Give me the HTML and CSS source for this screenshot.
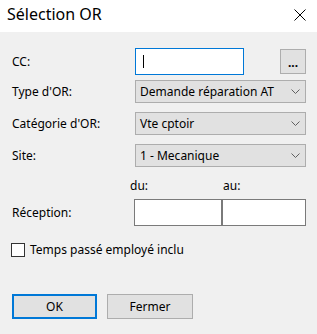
FILE: index.html
```html
<!DOCTYPE html>
<html lang="fr">
<head>
<meta charset="utf-8">
<title>Sélection OR</title>
<link rel="stylesheet" href="styles.css">
</head>
<body>
<div class="window">
  <div class="titlebar">
    <span class="title">Sélection OR</span>
    <svg class="close" width="12" height="12" viewBox="0 0 12 12"><path d="M0.5 0.5 L11.5 11.5 M11.5 0.5 L0.5 11.5" stroke="#000" stroke-width="1" fill="none"/></svg>
  </div>
  <div class="content">
    <div class="row row-cc">
      <span class="label">CC:</span>
      <div class="textbox textbox-cc"><span class="caret"></span></div>
      <button class="btn btn-dots">...</button>
    </div>
    <div class="row row-select row-first">
      <span class="label">Type d'OR:</span>
      <div class="combo"><span class="combo-text">Demande réparation AT</span><svg class="chev" width="9" height="5" viewBox="0 0 9 5"><path d="M0.5 0.5 L4.5 4.5 L8.5 0.5" stroke="#606060" fill="none" stroke-width="1"/></svg></div>
    </div>
    <div class="row row-select">
      <span class="label">Catégorie d'OR:</span>
      <div class="combo"><span class="combo-text">Vte cptoir</span><svg class="chev" width="9" height="5" viewBox="0 0 9 5"><path d="M0.5 0.5 L4.5 4.5 L8.5 0.5" stroke="#606060" fill="none" stroke-width="1"/></svg></div>
    </div>
    <div class="row row-select">
      <span class="label">Site:</span>
      <div class="combo"><span class="combo-text">1 - Mecanique</span><svg class="chev" width="9" height="5" viewBox="0 0 9 5"><path d="M0.5 0.5 L4.5 4.5 L8.5 0.5" stroke="#606060" fill="none" stroke-width="1"/></svg></div>
    </div>
    <div class="range-head">
      <span class="du">du:</span>
      <span class="au">au:</span>
    </div>
    <div class="row row-range">
      <span class="label">Réception:</span>
      <div class="textbox textbox-du"></div>
      <div class="textbox textbox-au"></div>
    </div>
    <div class="check-row">
      <span class="checkbox"></span>
      <span class="check-label">Temps passé employé inclu</span>
    </div>
    <div class="actions">
      <button class="btn btn-main btn-default">OK</button>
      <button class="btn btn-main">Fermer</button>
    </div>
  </div>
</div>
</body>
</html>
```

FILE: styles.css
```css
html, body {
  margin: 0;
  padding: 0;
}
body {
  width: 317px;
  height: 334px;
  background: #f0f0f0;
  font-family: "Noto Sans", "Open Sans", sans-serif;
  font-size: 12px;
  color: #000;
  overflow: hidden;
}
.window {
  display: flex;
  flex-direction: column;
}
.titlebar {
  height: 32px;
  background: #fff;
  display: flex;
  align-items: center;
  justify-content: space-between;
  padding: 0 11px 0 7px;
  box-sizing: border-box;
}
.title {
  font-size: 16px;
  margin-top: -4px;
}
.close {
  margin-top: -3px;
}
.content {
  display: flex;
  flex-direction: column;
  padding: 0 11px 0 12px;
}
.row {
  display: flex;
  align-items: center;
}
.label {
  width: 123px;
  flex: none;
}
.row-cc {
  margin-top: 16px;
  height: 27px;
}
.textbox {
  background: #fff;
  border: 1px solid #7a7a7a;
  box-sizing: border-box;
  height: 27px;
}
.textbox-cc {
  width: 109px;
  border-color: #0078d7;
  display: flex;
  align-items: center;
  padding-left: 7px;
}
.caret {
  width: 1px;
  height: 13px;
  background: #000;
}
.btn {
  font-family: inherit;
  font-size: 12px;
  color: #000;
  background: #e1e1e1;
  border: 1px solid #adadad;
  box-sizing: border-box;
  padding: 0;
  margin: 0;
}
.btn-dots {
  margin-left: 36px;
  width: 26px;
  height: 25px;
  font-weight: bold;
  line-height: 1;
  padding-top: 3px;
}
.row-select {
  margin-top: 9px;
  height: 23px;
}
.row-first {
  margin-top: 5px;
}
.combo {
  width: 171px;
  height: 23px;
  box-sizing: border-box;
  background: #e1e1e1;
  border: 1px solid #adadad;
  display: flex;
  align-items: center;
  justify-content: space-between;
  padding: 0 5px 0 4px;
}
.chev {
  display: block;
}
.range-head {
  margin-top: 10px;
  height: 17px;
  display: flex;
  align-items: center;
  padding-left: 118px;
}
.au {
  margin-left: 75px;
}
.row-range {
  margin-top: 5px;
  height: 27px;
}
.row-range .label {
  width: 122px;
}
.textbox-du {
  width: 89px;
}
.textbox-au {
  width: 84px;
}
.check-row {
  margin-top: 16px;
  display: flex;
  align-items: center;
  height: 15px;
}
.checkbox {
  width: 14px;
  height: 14px;
  box-sizing: border-box;
  border: 1px solid #333;
  background: #fff;
  margin-left: -1px;
  margin-right: 5px;
}
.actions {
  margin-top: 37px;
  display: flex;
  gap: 10px;
}
.btn-main {
  width: 86px;
  height: 25px;
}
.btn-default {
  width: 85px;
  border: 2px solid #0078d7;
}
```
